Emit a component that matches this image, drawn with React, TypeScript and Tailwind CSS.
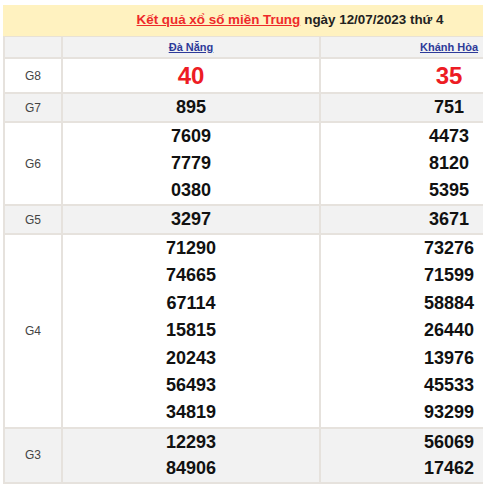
import React from "react";

const rows: { label: string; a: string[]; b: string[]; gray: boolean; special?: boolean; lh?: string }[] = [
  { label: "G8", a: ["40"], b: ["35"], gray: false, special: true },
  { label: "G7", a: ["895"], b: ["751"], gray: true },
  { label: "G6", a: ["7609", "7779", "0380"], b: ["4473", "8120", "5395"], gray: false },
  { label: "G5", a: ["3297"], b: ["3671"], gray: true },
  {
    label: "G4",
    a: ["71290", "74665", "67114", "15815", "20243", "56493", "34819"],
    b: ["73276", "71599", "58884", "26440", "13976", "45533", "93299"],
    gray: false,
    lh: "leading-[27.4px]",
  },
  { label: "G3", a: ["12293", "84906"], b: ["56069", "17462"], gray: true, lh: "leading-[26.5px]" },
];

function Nums({ list, special, lh }: { list: string[]; special?: boolean; lh?: string }) {
  if (special) {
    return <div className="text-[24px] font-bold text-[#ed1c24] leading-[33px]">{list[0]}</div>;
  }
  return (
    <div className={`text-[18px] font-bold text-[#111] ${lh ?? "leading-[27px]"}`}>
      {list.map((n) => (
        <div key={n}>{n}</div>
      ))}
    </div>
  );
}

export default function App() {
  return (
    <div
      className="w-[483px] h-[485px] overflow-hidden bg-white pt-[5px] pl-[3px]"
      style={{ fontFamily: '"Liberation Sans", Arial, sans-serif' }}
    >
      <div className="w-[574px]">
        <div className="h-[32px] bg-[#fff2c0] flex items-center justify-center text-[13.4px] font-bold border-b border-[#e8e2d6]">
          <a className="text-[#ee2a2a] underline">Kết quả xổ số miền Trung</a>
          <span className="text-[#222] ml-[4px]">ngày 12/07/2023 thứ 4</span>
        </div>
        <table className="w-[574px] table-fixed border-collapse">
          <colgroup>
            <col className="w-[58px]" />
            <col className="w-[258px]" />
            <col className="w-[258px]" />
          </colgroup>
          <tbody>
            <tr className="bg-[#f2f2f2]">
              <td className="border-x-2 border-b-2 border-[#e6e2dd] h-[21px]"></td>
              <td className="border-x-2 border-b-2 border-[#e6e2dd] text-center text-[11px] font-bold">
                <a className="text-[#2d3a99] underline">Đà Nẵng</a>
              </td>
              <td className="border-x-2 border-b-2 border-[#e6e2dd] text-center text-[11px] font-bold">
                <a className="text-[#2d3a99] underline">Khánh Hòa</a>
              </td>
            </tr>
            {rows.map((r) => (
              <tr key={r.label} className={r.gray ? "bg-[#f2f2f2]" : "bg-white"}>
                <td className="border-2 border-[#e6e2dd] text-center text-[12px] text-[#444] align-middle">
                  {r.label}
                </td>
                <td className="border-2 border-[#e6e2dd] text-center align-middle">
                  <Nums list={r.a} special={r.special} lh={r.lh} />
                </td>
                <td className="border-2 border-[#e6e2dd] text-center align-middle">
                  <Nums list={r.b} special={r.special} lh={r.lh} />
                </td>
              </tr>
            ))}
          </tbody>
        </table>
      </div>
    </div>
  );
}
